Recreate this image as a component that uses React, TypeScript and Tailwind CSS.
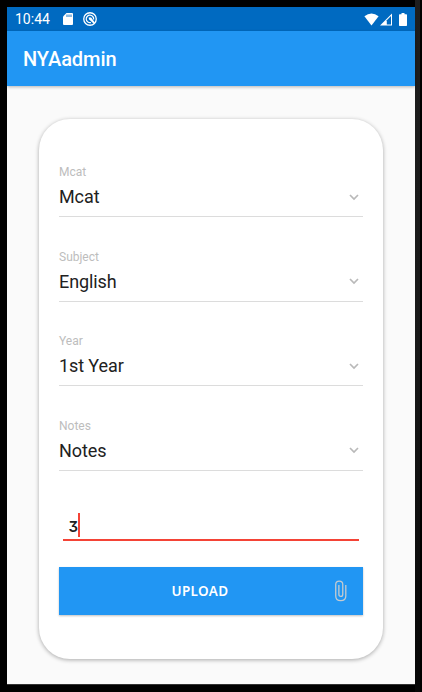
import React from "react";

const fields = [
  { label: "Mcat", value: "Mcat" },
  { label: "Subject", value: "English" },
  { label: "Year", value: "1st Year" },
  { label: "Notes", value: "Notes" },
];

function StatusBar() {
  return (
    <div className="flex h-6 shrink-0 items-center bg-[#006ac1] pl-2 pr-2 text-white">
      <span className="w-12 text-[14px] leading-6">10:44</span>
      <svg className="h-3 w-[10px]" viewBox="0 0 10 12" fill="none">
        <path d="M3.5 0H9Q10 0 10 1V11Q10 12 9 12H1Q0 12 0 11V3.5Z" fill="#fff" />
        <path d="M4 1.5V4M6 1.5V4M8 1.5V4" stroke="#006ac1" strokeWidth=".9" />
      </svg>
      <svg className="ml-[10px] h-[14px] w-[14px]" viewBox="0 0 15 15" fill="none">
        <circle cx="7.5" cy="7.5" r="6.7" stroke="#fff" strokeWidth="1.4" />
        <path d="M8.5 11.3A4 4 0 1 1 11.4 8" stroke="#fff" strokeWidth="1.3" />
        <path d="M6 6.2Q7.5 5 9 6.2L12.8 11.5L11.5 12.5L7.8 9.2Q6.2 8.2 6 6.2Z" fill="#fff" />
      </svg>
      <svg className="ml-auto h-[13px] w-[15px]" viewBox="0 0 15 13" fill="#fff">
        <path d="M.4 3.2Q7.5-2.4 14.6 3.2L7.5 12.5Z" />
      </svg>
      <svg className="ml-[1px] h-[13px] w-3" viewBox="0 0 12 13">
        <path d="M0 12.5L12 .5V12.5Z" fill="#fff" />
        <path d="M6.8 7.3L11 3.1V11.4H6.8Z" fill="#006ac1" />
      </svg>
      <svg className="ml-[7px] h-[13px] w-2" viewBox="0 0 8 13" fill="#fff">
        <path d="M2.5 0H5.5V1.2H7.3Q8 1.2 8 2V12.2Q8 13 7.3 13H.7Q0 13 0 12.2V2Q0 1.2.7 1.2H2.5Z" />
      </svg>
    </div>
  );
}

function SelectField({ label, value }: { label: string; value: string }) {
  return (
    <div className="h-[84.6px] shrink-0">
      <div className="h-[52px] border-b border-[#dcdcdc]">
        <div className="text-[12px] leading-[14px] text-[#bdbdbd]">{label}</div>
        <div className="mt-[6px] flex h-6 items-center justify-between">
          <span className="text-[18px] leading-6 tracking-[-0.1px] text-[#212121]">{value}</span>
          <svg className="mr-1 h-[7px] w-[10px]" viewBox="0 0 10 7" fill="none">
            <path d="M1 1L5 5L9 1" stroke="#b9b9b9" strokeWidth="1.7" />
          </svg>
        </div>
      </div>
    </div>
  );
}

export default function App() {
  return (
    <div className="flex h-[692px] w-[422px] bg-black font-['Roboto',sans-serif]">
      <div className="w-[415px] pl-[7px] pt-[7px]">
        <div className="flex h-[677px] w-[408px] flex-col bg-[#fafafa]">
          <StatusBar />
          <header className="z-10 flex h-[55px] shrink-0 items-center bg-[#2196f3] pl-4 shadow-[0_1px_3px_rgba(0,0,0,0.28)]">
            <h1 className="text-[20px] font-medium leading-6 tracking-[-0.05px] text-white">NYAadmin</h1>
          </header>
          <main className="ml-8 mt-[33px] flex h-[540px] w-[344px] flex-col rounded-[31px] bg-white px-5 pt-[46px] shadow-[0_1px_4px_rgba(0,0,0,0.33)]">
            {fields.map((field) => (
              <SelectField key={field.label} {...field} />
            ))}
            <div className="ml-1 mr-1 mt-[9.6px] flex h-[28px] shrink-0 items-start border-b-2 border-[#f44336] pl-[5.5px]">
              <span className="w-[9.5px] pt-[4px] font-['Inter',sans-serif] text-[15px] font-semibold leading-5 text-[#212121] [font-feature-settings:'cv09']">3</span>
              <span className="h-6 w-[2px] bg-[#f44336]" />
            </div>
            <button className="mt-[26.5px] flex h-[47.5px] shrink-0 items-center bg-[#2196f3] pr-[16px] text-white shadow-[0_1px_2px_rgba(0,0,0,0.25)]">
              <span className="flex-1 pl-[6px] text-center font-['Noto_Sans',sans-serif] text-[13.5px] font-semibold leading-5 tracking-[0.4px]">UPLOAD</span>
              <svg className="h-[22px] w-3" viewBox="0 0 13 23" fill="none" stroke="#c5cbd0" strokeWidth="1.4">
                <path d="M11.7 5V17Q11.7 22 6.2 22Q.8 22 .8 17V4.5Q.8 .8 4.6 .8Q8.4 .8 8.4 4.5V15Q8.4 17.4 6.3 17.4Q4.2 17.4 4.2 15V5" />
              </svg>
            </button>
          </main>
        </div>
        <div className="h-px w-[408px] bg-[#333]" />
      </div>
      <div className="w-[5px] bg-gradient-to-b from-[#1e1e1e] via-[#191919] to-[#070707]" />
    </div>
  );
}
